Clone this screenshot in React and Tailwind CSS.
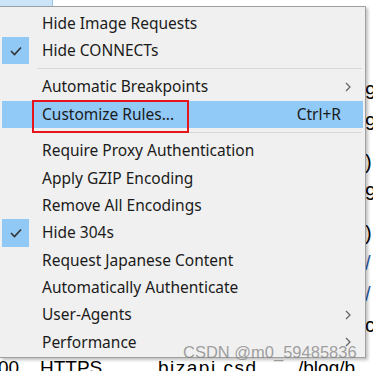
import React from 'react'

const menuItems = [
  { label: 'Hide Image Requests' },
  { label: 'Hide CONNECTs', checked: true },
  { sep: true },
  { label: 'Automatic Breakpoints', sub: true },
  { label: 'Customize Rules...', shortcut: 'Ctrl+R', active: true },
  { sep: true },
  { label: 'Require Proxy Authentication' },
  { label: 'Apply GZIP Encoding' },
  { label: 'Remove All Encodings' },
  { label: 'Hide 304s', checked: true },
  { label: 'Request Japanese Content' },
  { label: 'Automatically Authenticate' },
  { label: 'User-Agents', sub: true },
  { label: 'Performance', sub: true },
]

// glyphs of the list behind the menu, peeking out on the right edge
const edgeGlyphs = [
  { ch: '9', mt: 'mt-[76px]', color: 'text-black' },
  { ch: '9', mt: 'mt-[11px]', color: 'text-black' },
  { ch: ')', mt: 'mt-[19px]', color: 'text-black' },
  { ch: '9', mt: 'mt-[11px]', color: 'text-black' },
  { ch: ')', mt: 'mt-[20px]', color: 'text-black' },
  { ch: '/', mt: 'mt-[10px]', color: 'text-[#2a5aa8]' },
  { ch: '/', mt: 'mt-[11px]', color: 'text-[#2a5aa8]' },
  { ch: 'co', mt: 'mt-[11px]', color: 'text-black' },
]

function Check() {
  return (
    <svg width="12" height="10" viewBox="0 0 12 10">
      <polyline points="1,5 4.5,8.5 11,1.5" fill="none" stroke="#333" strokeWidth="1.6" />
    </svg>
  )
}

function Chevron() {
  return (
    <svg width="6" height="10" viewBox="0 0 6 10">
      <polyline points="1,1 5,5 1,9" fill="none" stroke="#666" strokeWidth="1.3" />
    </svg>
  )
}

function MenuRow({ item }) {
  if (item.sep) {
    return (
      <div className="h-[9px] flex items-center">
        <div className="ml-[35px] mr-[1px] flex-1 h-px bg-[#d7d7d7]" />
      </div>
    )
  }
  return (
    <div className={`h-[27.4px] flex items-center ${item.active ? 'bg-[#91c9f7]' : ''}`}>
      <div className={`w-[27px] h-full flex items-center justify-center ${item.checked ? 'bg-[#90c8f6]' : ''}`}>
        {item.checked && <Check />}
      </div>
      <span className="ml-[13px] flex-1 whitespace-nowrap text-[#1b1b1b]">{item.label}</span>
      {item.shortcut && <span className="text-[#1b1b1b]">{item.shortcut}</span>}
      <div className="w-[22px] pl-[4px] flex items-center">{item.sub && <Chevron />}</div>
    </div>
  )
}

export default function App() {
  return (
    <div className="relative w-[373px] h-[371px] overflow-hidden bg-white flex flex-col font-['Liberation_Sans',sans-serif]">
      {/* page behind the menu */}
      <div className="h-[6px] flex">
        <div className="w-[53px] h-full bg-[#cce4f7] border-r border-[#99c6ea]" />
      </div>
      <div className="flex-1 flex">
        <div className="flex-1" />
        <div className="w-[7px] flex flex-col overflow-hidden text-[20px] leading-[20px]">
          {edgeGlyphs.map((g, i) => (
            <span key={i} className={`${g.mt} ${g.color} h-[20px] -ml-[1px] whitespace-nowrap`}>
              {g.ch}
            </span>
          ))}
        </div>
      </div>
      <div className="h-[13px] flex items-start text-[19px] leading-[19px] text-black whitespace-nowrap">
        <span className="w-[42px] -ml-[2px]">00</span>
        <span className="w-[118px]">HTTPS</span>
        <span className="w-[140px] tracking-[1.5px]">bizapi.csd...</span>
        <span>/blog/b</span>
      </div>

      {/* context menu */}
      <div className="absolute left-0 top-[6px] w-[366px] h-[352px] bg-[#f0f0f0] border border-l-0 border-[#a0a0a0] shadow-[2px_2px_3px_rgba(0,0,0,0.25)] pt-[2.5px] px-[2px] font-['Noto_Sans',sans-serif] text-[15.5px]">
        {menuItems.map((item, i) => (
          <MenuRow key={i} item={item} />
        ))}
      </div>

      {/* red highlight box */}
      <div className="absolute left-[32px] top-[100px] w-[157px] h-[33px] border-2 border-[#e5151b]" />

      {/* watermark */}
      <div className="absolute left-[183px] top-[343px] text-[16.5px] leading-[18px] text-[rgba(130,130,130,0.75)] whitespace-nowrap">
        CSDN @m0_59485836
      </div>
    </div>
  )
}
